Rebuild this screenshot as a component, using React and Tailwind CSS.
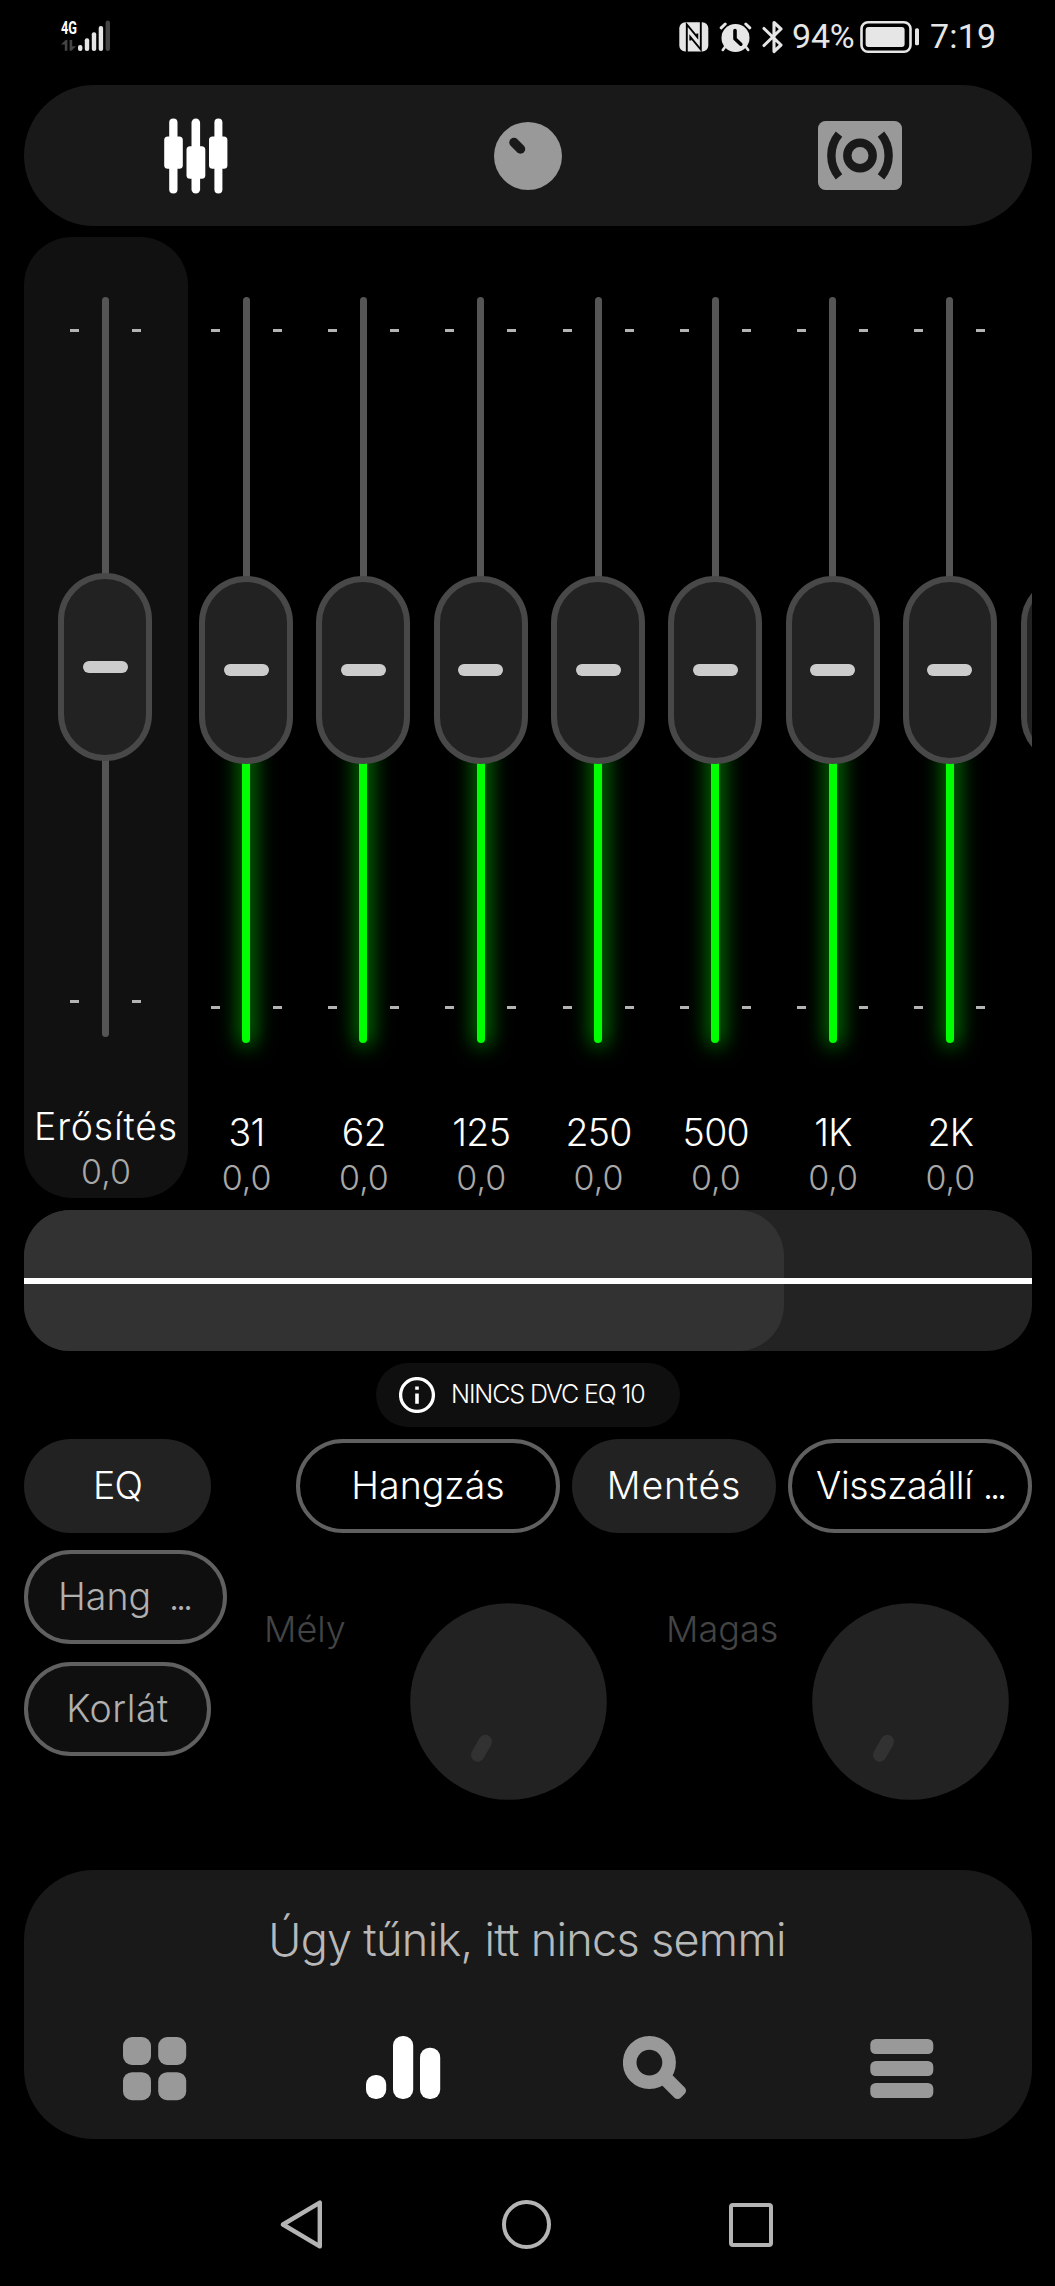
import clsx from "clsx";

// ─── Data ───────────────────────────────────────────────────────────────────
const bands = ["31", "62", "125", "250", "500", "1K", "2K"];

// ─── Status bar icons ───────────────────────────────────────────────────────
const SignalIcon = () => (
  <svg width="50" height="38" viewBox="0 -6 50 38" fill="#e6e6e6">
    <text
      x="0"
      y="14.3"
      fontFamily="Roboto"
      fontSize="19"
      fontWeight="700"
      textLength="16"
      lengthAdjust="spacingAndGlyphs"
      fill="#fff"
    >
      4G
    </text>
    <g fill="#444">
      <path d="M0 24.5 4.6 20H6.4v10.8H3.8v-6.3z" />
      <path d="M8.6 20h2.6v6.3H15l-4.6 4.5H8.6z" />
      <rect x="44.6" y="0.6" width="4.4" height="30.4" rx="2.2" />
    </g>
    <rect x="17" y="25" width="4.4" height="6" rx="2.1" />
    <rect x="23.8" y="18.2" width="4.4" height="12.8" rx="2.1" />
    <rect x="30.8" y="12.2" width="4.4" height="18.8" rx="2.1" />
    <rect x="37.7" y="6" width="4.4" height="25" rx="2.1" />
  </svg>
);

const NfcIcon = () => (
  <svg width="30" height="30" viewBox="0 0 30 30">
    <rect x="0.3" y="0.3" width="29" height="29.2" rx="6" fill="#e6e6e6" />
    <path
      d="M7.8 30V2.5L18.3 15.2V11.5M21.8 0v27.5L11.3 14.8v3.7"
      fill="none"
      stroke="#000"
      strokeWidth="1.9"
    />
  </svg>
);

const AlarmIcon = () => (
  <svg width="33" height="30" viewBox="0 0 33 30" fill="none">
    <g stroke="#e6e6e6" strokeLinecap="round">
      <path d="M2.2 5.8 6.2 2M30.8 5.8 26.8 2" strokeWidth="3" />
      <path d="M6 25 3.8 28M27 25l2.2 3" strokeWidth="2.6" />
    </g>
    <circle cx="16.5" cy="16" r="14" fill="#e6e6e6" />
    <path
      d="M16 8.5v8.3l5.8 5.4"
      stroke="#000"
      strokeWidth="3.6"
      strokeLinecap="round"
      strokeLinejoin="round"
    />
  </svg>
);

const BluetoothIcon = () => (
  <svg width="22" height="34" viewBox="0 0 22 34" fill="none">
    <path
      d="M2 8.5 19 25l-7 6.5V2.5L19 9 2 25.5"
      stroke="#e6e6e6"
      strokeWidth="3.1"
      strokeLinecap="round"
      strokeLinejoin="round"
    />
  </svg>
);

const BatteryIcon = () => (
  <svg width="60" height="32" viewBox="0 0 60 32" fill="none">
    <rect x="1.5" y="1.3" width="49" height="29.4" rx="6.5" stroke="#e6e6e6" strokeWidth="2.6" />
    <rect x="5.6" y="6" width="39" height="20" rx="3" fill="#e6e6e6" />
    <rect x="55" y="7.3" width="4" height="17" rx="1.6" fill="#e6e6e6" />
  </svg>
);

// ─── Tab icons ──────────────────────────────────────────────────────────────
const SlidersIcon = () => (
  <svg width="64" height="76" viewBox="0 0 64 76" fill="#fff">
    <rect x="5.2" y="0.5" width="8.3" height="75" rx="4.1" />
    <rect x="27.5" y="0.5" width="8.6" height="75" rx="4.3" />
    <rect x="50.4" y="0.5" width="8" height="75" rx="4" />
    <rect x="0.2" y="18.4" width="18.6" height="32.4" rx="3.6" />
    <rect x="22.5" y="28.2" width="18.8" height="32.6" rx="3.6" />
    <rect x="45" y="18.4" width="18.4" height="32.4" rx="3.6" />
  </svg>
);

const KnobIcon = () => (
  <svg width="68" height="68" viewBox="0 0 68 68">
    <circle cx="34" cy="34" r="34" fill="#999" />
    <path d="M20 20.5 26.5 27" stroke="#191919" strokeWidth="9.5" strokeLinecap="round" />
  </svg>
);

const SurroundIcon = () => (
  <svg width="84" height="69" viewBox="0 0 84 69">
    <rect width="84" height="69" rx="7.5" fill="#999" />
    <g fill="none" stroke="#191919" strokeWidth="8.4">
      <circle cx="42" cy="34.5" r="12.7" />
      <path d="M21 13.2a33.5 33.5 0 0 0 0 42.6M63 13.2a33.5 33.5 0 0 1 0 42.6" />
    </g>
  </svg>
);

// ─── Bottom navigation icons ────────────────────────────────────────────────
const GridIcon = () => (
  <svg width="64" height="64" viewBox="0 0 64 64" fill="#999" className="mt-[3px]">
    <rect x="0" y="0" width="28" height="28" rx="9" />
    <rect x="35.2" y="0" width="28" height="28" rx="9" />
    <rect x="0" y="35.2" width="28" height="28" rx="9" />
    <rect x="35.2" y="35.2" width="28" height="28" rx="9" />
  </svg>
);

const BarsIcon = () => (
  <svg width="75" height="64" viewBox="0 0 75 64" fill="#fff">
    <rect x="0" y="39" width="20.2" height="24" rx="9.6" />
    <rect x="27" y="0" width="20.2" height="63" rx="9.6" />
    <rect x="54" y="11.8" width="20.2" height="51.2" rx="9.6" />
  </svg>
);

const SearchIcon = () => (
  <svg width="64" height="64" viewBox="0 0 64 64" fill="none" className="ml-[5px]">
    <circle cx="26.4" cy="26.6" r="19.7" stroke="#999" strokeWidth="13.6" />
    <rect x="54" y="-7.3" width="30.5" height="14.6" rx="4.5" fill="#999" transform="rotate(45)" />
  </svg>
);

const MenuIcon = () => (
  <svg width="64" height="60" viewBox="0 0 64 60" fill="#999" className="mt-[3px]">
    <rect x="0.3" y="0" width="63" height="15" rx="5.5" />
    <rect x="0.3" y="22" width="63" height="15" rx="5.5" />
    <rect x="0.3" y="44" width="63" height="15" rx="5.5" />
  </svg>
);

const InfoIcon = () => (
  <svg width="36" height="36" viewBox="0 0 36 36" fill="none">
    <circle cx="18" cy="18" r="16.4" stroke="#fff" strokeWidth="3.3" />
    <path d="M18 9.4v3.4M18 16.5v10.2" stroke="#fff" strokeWidth="3.6" />
  </svg>
);

// ─── Fader ──────────────────────────────────────────────────────────────────
const TickPair = () => (
  <div className="flex justify-between w-[71px]">
    <span className="w-[9px] h-[3px] bg-[#b4b4b4]" />
    <span className="w-[9px] h-[3px] bg-[#b4b4b4]" />
  </div>
);

const Fader = ({ label, value, preamp }) => (
  <div
    className={clsx(
      "flex flex-col items-center flex-shrink-0 pt-[60px]",
      preamp ? "w-[164px] h-[961px] rounded-[48px] bg-[#111]" : "w-[117.3px]",
    )}
  >
    {/* Track, ticks and handle share a single grid cell */}
    <div
      className={clsx(
        "grid flex-shrink-0 justify-items-center w-full",
        preamp ? "h-[740px] pr-[2px]" : "h-[746px] pr-[1px]",
      )}
    >
      <div className="col-start-1 row-start-1 flex flex-col items-center w-2">
        <div
          className={clsx(
            "w-[7px] bg-[#555]",
            preamp ? "h-full rounded-full" : "h-[400px] rounded-t-full",
          )}
        />
        {!preamp && (
          <div className="flex-1 w-2 rounded-b-full bg-[#00ff00] shadow-[1px_0_20px_4px_rgba(0,255,0,0.5)]" />
        )}
      </div>
      <div className="col-start-1 row-start-1 flex flex-col justify-between pt-[32px] pb-[34px]">
        <TickPair />
        <TickPair />
      </div>
      <div
        className={clsx(
          "col-start-1 row-start-1 relative flex items-center justify-center w-[94px] h-[188px] rounded-full border-[6px] border-[#484848] bg-[#222]",
          preamp ? "mt-[276px]" : "mt-[279px]",
        )}
      >
        <span className="w-[45px] h-[12px] rounded-full bg-[#ccc]" />
      </div>
    </div>
    <span
      className={clsx(
        "mt-[68px] text-[37.5px] leading-[44px] font-light text-white whitespace-nowrap",
        preamp ? "tracking-[0.8px]" : "tracking-[-0.7px]",
      )}
    >
      {label}
    </span>
    <span className="text-[34px] leading-[45px] font-light text-[#a8a8a8]">{value}</span>
  </div>
);

// ─── Buttons and knobs ──────────────────────────────────────────────────────
const Pill = ({ children, className }) => (
  <button
    className={clsx(
      "flex items-center justify-center h-[94px] rounded-full text-[37.5px] font-light whitespace-pre",
      className,
    )}
  >
    {children}
  </button>
);

const ToneKnob = ({ label }) => (
  <div className="flex justify-between w-[343px]">
    <span className="mt-[1px] text-[36px] leading-[50px] font-light text-[#444]">{label}</span>
    <svg width="197" height="197" viewBox="0 0 197 197">
      <circle cx="98.5" cy="98.5" r="98.3" fill="#222" />
      <path d="M75.3 138.6 67.7 152" stroke="#323232" strokeWidth="13.5" strokeLinecap="round" />
    </svg>
  </div>
);

// ─── App ────────────────────────────────────────────────────────────────────
export default function App() {
  return (
    <div className="w-[1055px] h-[2286px] flex flex-col bg-black font-['Inter','Liberation_Sans',sans-serif] overflow-hidden">
      {/* Status bar */}
      <header className="flex items-start justify-between h-[85px] pt-[14px] px-[61px] flex-shrink-0">
        <SignalIcon />
        <div className="flex items-center h-[33px] mt-[6px] text-[34px] leading-[33px] text-[#e6e6e6] font-['Roboto']">
          <NfcIcon />
          <div className="ml-[10px]">
            <AlarmIcon />
          </div>
          <div className="ml-[10px]">
            <BluetoothIcon />
          </div>
          <span className="ml-[8px] w-[68px] tracking-[-0.2px]">94%</span>
          <BatteryIcon />
          <span className="ml-[10px] w-[64px] tracking-[0.2px]">7:19</span>
        </div>
      </header>

      <main className="flex flex-col px-[24px] w-[1056px]">
        {/* Tabs */}
        <nav className="grid grid-cols-3 items-center justify-items-center h-[141px] px-[6px] rounded-full bg-[#191919]">
          <SlidersIcon />
          <KnobIcon />
          <SurroundIcon />
        </nav>

        {/* Equalizer */}
        <section className="flex mt-[11px] h-[961px] overflow-hidden">
          <Fader label="Erősítés" value="0,0" preamp />
          {bands.map((band) => (
            <Fader key={band} label={band} value="0,0" />
          ))}
          <div className="flex-shrink-0 w-[94px] h-[188px] mt-[339px] ml-[11.5px] rounded-full border-[6px] border-[#484848] bg-[#222]" />
        </section>

        {/* Frequency response */}
        <section className="flex-shrink-0 grid mt-[12px] h-[141px]">
          <div className="col-start-1 row-start-1 rounded-[46px] bg-[#232323]">
            <div className="w-[760px] h-full rounded-[46px] bg-[#323232]" />
          </div>
          <div className="col-start-1 row-start-1 self-center h-[6px] bg-white" />
        </section>

        <div className="self-center flex items-center mt-[12px] w-[304px] h-[64px] pl-[23px] rounded-full bg-[#0f0f0f]">
          <InfoIcon />
          <span className="ml-[16px] text-[25px] font-light text-white tracking-[-1.1px] whitespace-nowrap">
            NINCS DVC EQ 10
          </span>
        </div>

        {/* Controls */}
        <section className="mt-[12px] h-[431px]">
          <div className="flex gap-[12px] text-white">
            <Pill className="w-[187px] mr-auto bg-[#222] tracking-[-1px]">EQ</Pill>
            <Pill className="w-[264px] border-4 border-[#606060]">Hangzás</Pill>
            <Pill className="w-[204px] bg-[#222] tracking-[0.8px]">Mentés</Pill>
            <Pill className="w-[244px] border-4 border-[#606060] tracking-[-0.4px]">
              Visszaállí <span className="tracking-[-3.5px]">...</span>
            </Pill>
          </div>
          <div className="flex">
            <div className="flex flex-col gap-[18px] mt-[17px] w-[240px] text-[#b0b0b0]">
              <Pill className="w-[203px] border-4 border-[#606060] bg-[#0f0f0f]">
                {"Hang "}
                <span className="ml-[7px] mr-[3px] tracking-[-3.5px]">...</span>
              </Pill>
              <Pill className="w-[187px] border-4 border-[#606060] bg-[#0f0f0f] tracking-[0.5px]">
                Korlát
              </Pill>
            </div>
            <div className="flex gap-[59px] mt-[70px]">
              <ToneKnob label="Mély" />
              <ToneKnob label="Magas" />
            </div>
          </div>
        </section>

        {/* Mini player with navigation */}
        <section className="h-[269px] px-[6px] rounded-[70px] bg-[#191919]">
          <p className="pt-[40px] pr-[2px] text-center text-[45px] leading-[60px] font-light text-[#b8b8b8] tracking-[-0.7px]">
            Úgy tűnik, itt nincs semmi
          </p>
          <div className="grid grid-cols-4 items-center justify-items-center mt-[64px] h-[64px]">
            <GridIcon />
            <BarsIcon />
            <SearchIcon />
            <MenuIcon />
          </div>
        </section>
      </main>

      {/* System navigation */}
      <footer className="flex items-center justify-between h-[49px] mt-[61px] pl-[280px] pr-[282px] flex-shrink-0">
        <svg width="43" height="49" viewBox="0 0 43 49" fill="none">
          <path
            d="M39.8 2.6v43.8L3 24.5z"
            stroke="#b4b4b4"
            strokeWidth="4.4"
            strokeLinejoin="round"
          />
        </svg>
        <div className="w-[49px] h-[49px] rounded-full border-[4px] border-[#b4b4b4]" />
        <div className="w-[44px] h-[44px] rounded-[4px] border-[4px] border-[#b4b4b4]" />
      </footer>
    </div>
  );
}
